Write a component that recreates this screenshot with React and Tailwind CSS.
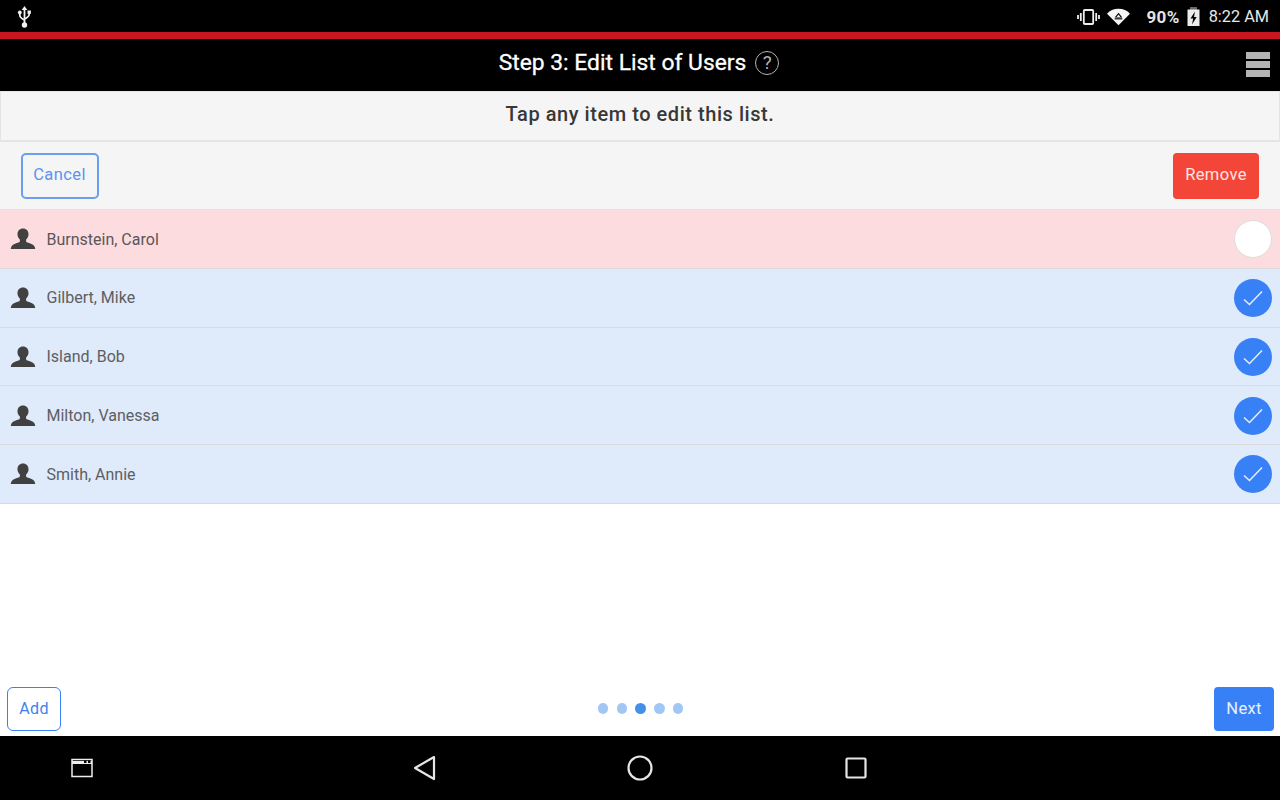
const users = [
  { name: "Burnstein, Carol", removed: true },
  { name: "Gilbert, Mike" },
  { name: "Island, Bob" },
  { name: "Milton, Vanessa" },
  { name: "Smith, Annie" },
];

function Person() {
  return (
    <svg width="26" height="24" viewBox="0 0 26 24" className="shrink-0">
      <path
        fill="#414141"
        d="M13 1.500c3.300 0 5.500 2.400 5.500 5.700 0 2.300-1 4.200-2.400 5.300v1.400c0 .8.500 1.200 1.300 1.500 2.200.8 5 1.400 6.400 3 .9 1 1.400 2.300 1.400 3.600H.8c0-1.300.5-2.600 1.400-3.600 1.400-1.600 4.200-2.200 6.400-3 .8-.3 1.300-.7 1.300-1.500v-1.400c-1.400-1.100-2.400-3-2.400-5.300 0-3.300 2.200-5.700 5.500-5.700z"
      />
    </svg>
  );
}

function Row({ name, removed }) {
  return (
    <div
      className={`flex h-[58.8px] items-center border-b border-[#dcdcdc] pl-[10px] pr-[8px] pt-[0.5px] ${
        removed ? "bg-[#fddcdf]" : "bg-[#dfeafa]"
      }`}
    >
      <Person />
      <span className={`ml-[10.5px] flex-1 pt-[1px] text-[16px] ${removed ? "text-[#5a5558]" : "text-[#5c5f63]"}`}>{name}</span>
      {removed ? (
        <span className="h-[38px] w-[38px] rounded-full border border-[#dddddd] bg-white" />
      ) : (
        <span className="flex h-[38px] w-[38px] items-center justify-center rounded-full bg-[#3880f6]">
          <svg width="20" height="16" viewBox="0 0 20 16" fill="none" stroke="#e6effd" strokeWidth="1.5">
            <path d="M1 9.500L6.500 14.500L19 1.500" />
          </svg>
        </span>
      )}
    </div>
  );
}

export default function App() {
  return (
    <div className="flex h-[800px] w-[1280px] flex-col overflow-hidden bg-white font-['Roboto',sans-serif]">
      <div className="flex h-[39px] shrink-0 items-center justify-between border-b-[7px] border-[#c91522] bg-black pl-[16px] pr-[11px] pt-[1px]">
        <svg width="17" height="22" viewBox="0 0 17 22" fill="#f2f2f2">
          <path d="M8.500 0l2.800 4H5.700z" />
          <path d="M7.600 3h1.800v16H7.600z" />
          <circle cx="8.500" cy="19" r="2.700" />
          <circle cx="3.800" cy="6.500" r="1.900" />
          <path d="M11.500 4.500h3.400v3.400h-3.400z" />
          <path d="M3.800 7v2.300c0 2 1.700 3.200 4.700 4.700M13.200 7v1.300c0 2-1.700 3.200-4.700 4.700" fill="none" stroke="#f2f2f2" strokeWidth="1.700" />
        </svg>
        <div className="flex items-center pt-[1px] text-[#efefef]">
          <svg width="23" height="16" viewBox="0 0 23 16" fill="none" stroke="#efefef" strokeWidth="1.800" className="mr-[7px]">
            <rect x="6.800" y="1" width="9.400" height="14" rx="1" />
            <path d="M3.800 4v8M19.200 4v8M1 6v4M22 6v4" />
          </svg>
          <svg width="23" height="18" viewBox="0 0 24 18" className="mr-[16px]">
            <path fill="#f5f5f5" d="M0 5.500C3 2.300 7 .5 12 .5s9 1.800 12 5L12 17.500z" />
            <path fill="#000" d="M12 4.500l4 5H8z" />
            <path fill="#f5f5f5" d="M12 6.500l2 2.400h-4z" />
            <path fill="#000" d="M8 10.300h8v1.200H8z" />
          </svg>
          <span className="mr-[7px] pt-[1px] text-[17px] font-bold tracking-[0.4px] text-[#e4e4e4]">90%</span>
          <svg width="13" height="20" viewBox="0 0 13 20" className="mr-[9px]">
            <rect x="3" y="0" width="7" height="3" fill="#6a6a6a" />
            <rect x="0.500" y="2.500" width="12" height="16.500" fill="#ececec" />
            <path fill="#000" d="M8 4.500L3.500 11.500h2.700L5 17.500l4.700-7.500H7z" />
          </svg>
          <span className="text-[16.300px] text-[#e8e8e8]">8:22 AM</span>
        </div>
      </div>

      <div className="relative flex h-[52px] shrink-0 items-center justify-center bg-black pb-[4px] pr-[2px]">
        <span className="text-[22.850px] text-white [-webkit-text-stroke:0.3px_white]">Step 3: Edit List of Users</span>
        <span className="ml-[9px] flex h-[24px] w-[24px] items-center justify-center rounded-full border-[1.500px] border-[#b5b5b5] text-[19px] text-[#b5b5b5]">
          ?
        </span>
        <div className="absolute right-[10px] top-[13px] flex w-[24px] flex-col gap-[2px]">
          <span className="h-[7px] bg-[#b4b4b4]" />
          <span className="h-[7px] bg-[#b4b4b4]" />
          <span className="h-[7px] bg-[#b4b4b4]" />
        </div>
      </div>

      <div className="flex h-[51px] shrink-0 items-center justify-center border border-b-2 border-[#e4e4e4] bg-[#f5f5f5] pb-[4px] text-[20px] font-medium tracking-[0.55px] text-[#383838]">
        Tap any item to edit this list.
      </div>

      <div className="flex h-[68px] shrink-0 items-center justify-between border-b border-[#e2e2e2] bg-[#f5f5f5] pl-[21px] pr-[21px]">
        <button className="flex h-[46px] w-[78px] items-center justify-center rounded-[5px] border-2 border-[#6a9ff0] pr-[1px] text-[16.500px] tracking-[0.4px] text-[#5b93f0]">
          Cancel
        </button>
        <button className="flex h-[46px] w-[86px] items-center justify-center rounded-[4px] bg-[#f44539] text-[16.500px] tracking-[0.4px] text-[#fde5e3]">
          Remove
        </button>
      </div>

      <div className="flex flex-1 flex-col">
        {users.map((u) => (
          <Row key={u.name} {...u} />
        ))}
      </div>

      <div className="flex h-[49px] shrink-0 items-start justify-between pl-[7px] pr-[6px]">
        <button className="flex h-[44px] w-[54px] items-center justify-center rounded-[6px] border border-[#3880f6] text-[16px] tracking-[0.4px] text-[#3f82ee]">
          Add
        </button>
        <div className="ml-[6px] mt-[16px] flex items-center gap-[8.250px]">
          <span className="h-[10.500px] w-[10.500px] rounded-full bg-[#a2c7f5]" />
          <span className="h-[10.500px] w-[10.500px] rounded-full bg-[#a2c7f5]" />
          <span className="h-[10.500px] w-[10.500px] rounded-full bg-[#448fe9]" />
          <span className="h-[10.500px] w-[10.500px] rounded-full bg-[#a2c7f5]" />
          <span className="h-[10.500px] w-[10.500px] rounded-full bg-[#a2c7f5]" />
        </div>
        <button className="flex h-[44px] w-[60px] items-center justify-center rounded-[4px] bg-[#3880f6] text-[16.500px] tracking-[0.3px] text-[#e8f0fe]">
          Next
        </button>
      </div>

      <div className="flex h-[64px] shrink-0 items-center bg-black pl-[71px]">
        <svg width="22" height="20" viewBox="0 0 22 20" fill="none" className="mr-[320px]">
          <rect x="1" y="1.500" width="20" height="17" stroke="#eeeeee" strokeWidth="1.500" />
          <path d="M1 3h20v3H1z" fill="#eeeeee" />
          <path d="M13 2.500h2.500v2.500H13zM17 2.500h2.500v2.500H17z" fill="#000" />
        </svg>
        <svg width="24" height="26" viewBox="0 0 24 26" fill="none" stroke="#e6e6e6" strokeWidth="2.200" strokeLinejoin="round" className="mr-[190px]">
          <path d="M21 2L2 13l19 11z" />
        </svg>
        <svg width="26" height="26" viewBox="0 0 26 26" fill="none" stroke="#e6e6e6" strokeWidth="2.200" className="mr-[191.5px]">
          <circle cx="13" cy="13" r="11.500" />
        </svg>
        <svg width="22" height="22" viewBox="0 0 22 22" fill="none" stroke="#e6e6e6" strokeWidth="2.200" strokeLinejoin="round">
          <rect x="1.500" y="1.500" width="19" height="19" rx="1" />
        </svg>
      </div>
    </div>
  );
}
